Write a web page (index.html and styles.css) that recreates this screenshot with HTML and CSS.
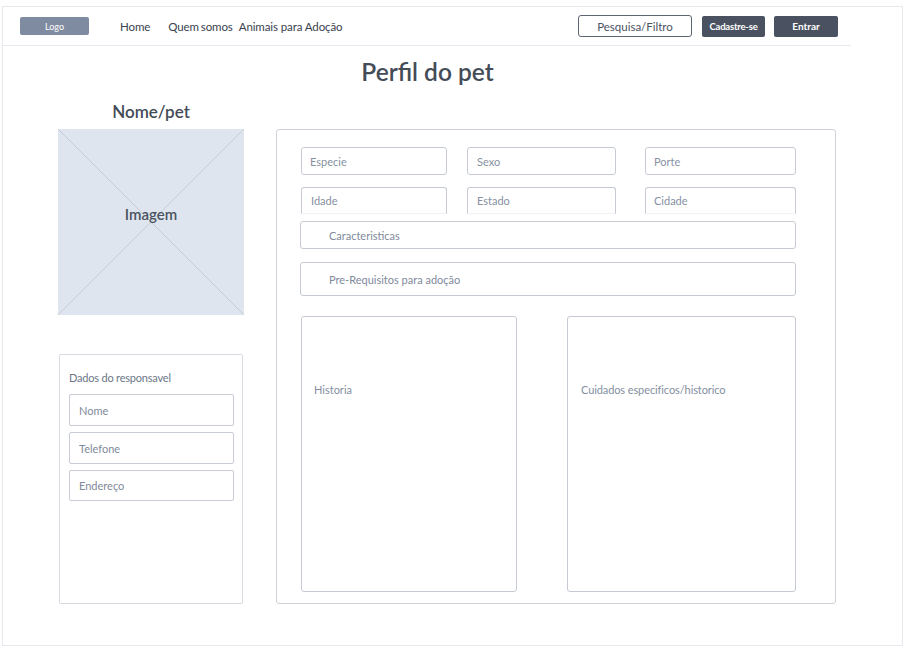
FILE: index.html
```html
<!DOCTYPE html>
<html lang="pt">
<head>
<meta charset="utf-8">
<title>Perfil do pet</title>
<link rel="stylesheet" href="styles.css">
</head>
<body>
<div class="frame">
  <header class="topbar">
    <div class="logo">Logo</div>
    <nav class="nav">
      <span class="nav-home">Home</span>
      <span class="nav-quem">Quem somos</span>
      <span>Animais para Adoção</span>
    </nav>
    <div class="actions">
      <div class="btn-outline">Pesquisa/Filtro</div>
      <div class="btn-dark btn-cad">Cadastre-se</div>
      <div class="btn-dark btn-entrar">Entrar</div>
    </div>
  </header>

  <h1 class="title">Perfil do pet</h1>

  <div class="content">
    <div class="left">
      <div class="pet-name">Nome/pet</div>
      <div class="image">
        <svg class="image-x" viewBox="0 0 186 186" preserveAspectRatio="none">
          <line x1="0" y1="0" x2="186" y2="186" stroke="#c6cdd7" stroke-width="1"/>
          <line x1="186" y1="0" x2="0" y2="186" stroke="#c6cdd7" stroke-width="1"/>
        </svg>
        <span class="image-label">Imagem</span>
      </div>
      <div class="owner">
        <div class="owner-title">Dados do responsavel</div>
        <div class="owner-input">Nome</div>
        <div class="owner-input">Telefone</div>
        <div class="owner-input last">Endereço</div>
      </div>
    </div>

    <div class="right">
      <div class="card">
        <div class="row row1">
          <div class="field w1">Especie</div>
          <div class="field w2 pad9">Sexo</div>
          <div class="field w3">Porte</div>
        </div>
        <div class="row row2">
          <div class="field open w1 pad9">Idade</div>
          <div class="field open w2 pad9">Estado</div>
          <div class="field open w3">Cidade</div>
        </div>
        <div class="wide open carac">Caracteristicas</div>
        <div class="wide prereq">Pre-Requisitos para adoção</div>
        <div class="boxes">
          <div class="box box-hist">Historia</div>
          <div class="box box-cuid">Cuidados especificos/historico</div>
        </div>
      </div>
    </div>
  </div>
</div>
</body>
</html>
```

FILE: styles.css
```css
* { box-sizing: border-box; }

html, body {
  margin: 0;
  padding: 0;
  background: #ffffff;
}

body {
  font-family: Lato, "Open Sans", "Liberation Sans", sans-serif;
  color: #3b4350;
}

.frame {
  margin: 6px 0 0 2px;
  width: 901px;
  height: 640px;
  border: 1px solid #e5e8ed;
}

/* Header */
.topbar {
  width: 848px;
  height: 39px;
  border-bottom: 1px solid #e6e9ef;
  display: flex;
  align-items: center;
  padding: 0 13px 0 17px;
}

.logo {
  width: 69px;
  height: 18px;
  background: #7f8ba0;
  border-radius: 2px;
  color: #ffffff;
  font-size: 9px;
  display: flex;
  align-items: center;
  justify-content: center;
}

.nav {
  margin-left: 31px;
  display: flex;
  font-size: 11.5px;
  color: #3a424e;
  letter-spacing: -0.1px;
}

.nav-home { margin-right: 18px; }
.nav-quem { margin-right: 6px; word-spacing: -1px; }

.actions {
  margin-left: auto;
  display: flex;
  align-items: center;
}

.btn-outline {
  width: 114px;
  height: 22px;
  border: 1px solid #5d6573;
  border-radius: 3px;
  font-size: 11.5px;
  color: #4a525f;
  display: flex;
  align-items: center;
  justify-content: center;
  margin-right: 10px;
}

.btn-dark {
  height: 21px;
  background: #4a5261;
  border-radius: 2px;
  color: #ffffff;
  font-weight: 700;
  font-size: 9.5px;
  display: flex;
  align-items: center;
  justify-content: center;
}

.btn-cad { width: 63px; margin-right: 9px; letter-spacing: -0.2px; }
.btn-entrar { width: 64px; font-size: 10px; }

/* Title */
.title {
  margin: 11px 0 0 0;
  height: 30px;
  line-height: 30px;
  text-align: center;
  font-size: 24.5px;
  font-weight: 600;
  color: #444c58;
  padding-right: 50px;
}

/* Content */
.content {
  display: flex;
  margin-top: 13px;
  padding-left: 55px;
}

.left {
  width: 186px;
  display: flex;
  flex-direction: column;
}

.pet-name {
  height: 24px;
  line-height: 24px;
  text-align: center;
  font-size: 17px;
  font-weight: 600;
  color: #434b57;
  margin-bottom: 5px;
}

.image {
  position: relative;
  width: 186px;
  height: 186px;
  background: #dfe5ee;
  display: flex;
  align-items: center;
  justify-content: center;
  padding-bottom: 17px;
}

.image-x {
  position: absolute;
  left: 0;
  top: 0;
  width: 100%;
  height: 100%;
}

.image-label {
  position: relative;
  font-size: 15px;
  font-weight: 600;
  color: #4b5361;
}

.owner {
  margin: 39px 0 0 1px;
  width: 184px;
  height: 250px;
  border: 1px solid #d6dae1;
  border-radius: 2px;
  padding: 15px 8px 0 9px;
  display: flex;
  flex-direction: column;
}

.owner-title {
  font-size: 11px;
  line-height: 16px;
  color: #6c7787;
  letter-spacing: -0.2px;
  margin-bottom: 8px;
}

.owner-input {
  height: 32px;
  border: 1px solid #c8cdd5;
  border-radius: 2px;
  padding-left: 9px;
  font-size: 11px;
  color: #7f8a9b;
  display: flex;
  align-items: center;
  margin-bottom: 6px;
}

.owner-input.last { height: 31px; }

/* Right card */
.right {
  margin-left: 32px;
  padding-top: 29px;
}

.card {
  width: 560px;
  height: 475px;
  border: 1px solid #cdd2d9;
  border-radius: 3px;
  padding: 17px 0 0 24px;
}

.row {
  display: flex;
}

.row1 { height: 28px; }
.row2 { height: 27px; margin-top: 12px; }

.field {
  height: 100%;
  border: 1px solid #c6cbd3;
  border-radius: 3px;
  padding-left: 8px;
  font-size: 11px;
  color: #8691a2;
  display: flex;
  align-items: center;
}

.pad9 { padding-left: 9px; }

.w1 { width: 146px; margin-right: 20px; }
.w2 { width: 149px; margin-right: 29px; }
.w3 { width: 151px; }

.open {
  border-bottom-color: #f1f3f6;
  border-bottom-left-radius: 0;
  border-bottom-right-radius: 0;
}

.wide {
  width: 496px;
  margin-left: -1px;
  border: 1px solid #c6cbd3;
  border-radius: 3px;
  padding-left: 28px;
  font-size: 11px;
  color: #7f8a9b;
  display: flex;
  align-items: center;
}

.carac { height: 28px; margin-top: 7px; }
.prereq { height: 34px; margin-top: 13px; }

.boxes {
  display: flex;
  margin-top: 20px;
}

.box {
  height: 276px;
  border: 1px solid #c6cbd3;
  border-radius: 3px;
  font-size: 11px;
  color: #8490a1;
  padding-top: 66px;
}

.box-hist { width: 216px; padding-left: 12px; margin-right: 50px; }
.box-cuid { width: 229px; padding-left: 13px; letter-spacing: -0.1px; }
```
